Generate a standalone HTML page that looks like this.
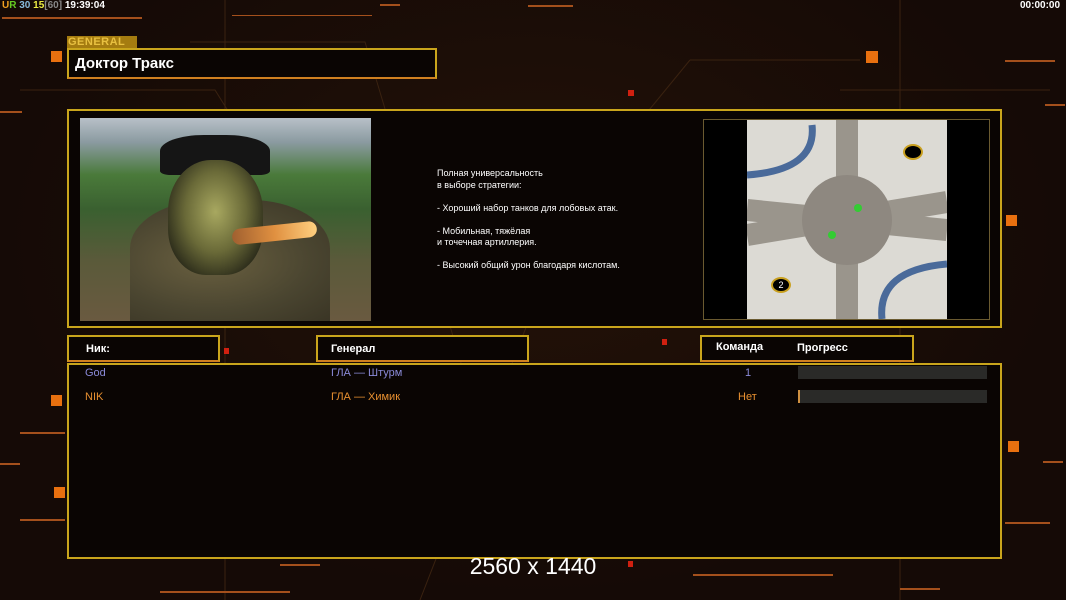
<!DOCTYPE html>
<html><head><meta charset="utf-8"><style>
*{margin:0;padding:0;box-sizing:border-box}
body{width:1066px;height:600px;overflow:hidden;background:#170c07;font-family:"Liberation Sans",sans-serif;position:relative}
.a{position:absolute}
.box{position:absolute;border:2px solid #c9a51c;background:#0a0503}
.ln{position:absolute;height:2px;background:#a4501c}
.sq{position:absolute;background:#e8700f}
.t{position:absolute;font-size:11px;color:#fff;font-weight:bold}
.r{position:absolute;font-size:11px}
</style></head><body>
<div class="a" style="left:0;top:0;width:1066px;height:600px;background:radial-gradient(ellipse at 50% 40%,#241208 0%,#150a06 70%)"></div>
<svg class="a" style="left:0;top:0" width="1066" height="600"><g stroke="#3a2210" stroke-width="1" fill="none">
<path d="M20 90 L215 90 L240 130"/><path d="M190 42 L365 42 L520 560"/><path d="M690 60 L860 60"/><path d="M840 90 L1050 90"/><path d="M600 170 L690 60"/><path d="M900 0 L900 600"/><path d="M225 0 L225 600"/><path d="M420 600 L560 240"/></g></svg>
<div class="ln" style="left:2px;top:17px;width:140px"></div>
<div class="ln" style="left:232px;top:15px;width:140px;height:1px"></div>
<div class="ln" style="left:380px;top:4px;width:20px"></div>
<div class="ln" style="left:528px;top:5px;width:45px"></div>
<div class="ln" style="left:0;top:111px;width:22px"></div>
<div class="ln" style="left:20px;top:432px;width:45px"></div>
<div class="ln" style="left:20px;top:519px;width:45px"></div>
<div class="ln" style="left:0;top:463px;width:20px"></div>
<div class="ln" style="left:1005px;top:60px;width:50px"></div>
<div class="ln" style="left:1045px;top:104px;width:20px"></div>
<div class="ln" style="left:1005px;top:522px;width:45px"></div>
<div class="ln" style="left:1043px;top:461px;width:20px"></div>
<div class="ln" style="left:280px;top:564px;width:40px"></div>
<div class="ln" style="left:693px;top:574px;width:140px"></div>
<div class="ln" style="left:160px;top:591px;width:130px"></div>
<div class="ln" style="left:900px;top:588px;width:40px"></div>
<div class="sq" style="left:51px;top:51px;width:11px;height:11px"></div>
<div class="sq" style="left:866px;top:51px;width:12px;height:12px"></div>
<div class="sq" style="left:1006px;top:215px;width:11px;height:11px"></div>
<div class="sq" style="left:1008px;top:441px;width:11px;height:11px"></div>
<div class="sq" style="left:51px;top:395px;width:11px;height:11px"></div>
<div class="sq" style="left:54px;top:487px;width:11px;height:11px"></div>
<div class="sq" style="left:628px;top:90px;width:6px;height:6px;background:#d02010"></div>
<div class="sq" style="left:224px;top:348px;width:5px;height:6px;background:#d02010"></div>
<div class="sq" style="left:662px;top:339px;width:5px;height:6px;background:#d02010"></div>
<div class="sq" style="left:628px;top:561px;width:5px;height:6px;background:#d02010"></div>
<div class="t" style="left:2px;top:0;font-size:10px"><span style="color:#f0a020">U</span><span style="color:#6c2">R</span> <span style="color:#8bd">30</span> <span style="color:#ee4">15</span><span style="color:#888">[60]</span> 19:39:04</div>
<div class="t" style="left:1020px;top:0;font-size:10px">00:00:00</div>
<div class="a" style="left:67px;top:36px;width:70px;height:12px;background:#a57c10;color:#e8c040;font-size:11px;font-weight:bold;line-height:12px;padding-left:1px;letter-spacing:0.5px">GENERAL</div>
<div class="box" style="left:67px;top:48px;width:370px;height:31px;border-bottom-color:#d08020"><div class="t" style="left:6px;top:5px;font-size:15px">Доктор Тракс</div></div>
<div class="box" style="left:67px;top:109px;width:935px;height:219px"></div>
<div class="a" style="left:80px;top:118px;width:291px;height:203px;background:linear-gradient(180deg,#b8c0c8 0%,#8a9aa0 12%,#4a7a3a 28%,#3a6030 45%,#5a5a3a 70%,#6a5a40 100%)"></div>
<div class="a" style="left:130px;top:200px;width:200px;height:121px;border-radius:40% 40% 0 0;background:radial-gradient(ellipse at 40% 50%,#6a6040 0%,#4a4530 60%,#3a3525 100%)"></div>
<div class="a" style="left:160px;top:135px;width:110px;height:40px;border-radius:40% 40% 10% 10%;background:#151515"></div>
<div class="a" style="left:168px;top:160px;width:95px;height:115px;border-radius:45% 45% 40% 40%;background:radial-gradient(ellipse at 50% 45%,#a8a860 0%,#6a6a38 45%,#202015 85%)"></div>
<div class="a" style="left:232px;top:225px;width:85px;height:16px;border-radius:8px;background:linear-gradient(90deg,#a06030,#e09040,#ffd080);transform:rotate(-6deg)"></div>
<div class="r" style="left:437px;top:168px;color:#fff;font-size:9px;line-height:11.5px">Полная универсальность<br>в выборе стратегии:<br><br>- Хороший набор танков для лобовых атак.<br><br>- Мобильная, тяжёлая<br>и точечная артиллерия.<br><br>- Высокий общий урон благодаря кислотам.</div>
<div class="a" style="left:703px;top:119px;width:287px;height:201px;background:#000;border:1px solid #6a5a30"></div>
<div class="a" style="left:747px;top:120px;width:200px;height:199px;background:#dcdad4;overflow:hidden">
<svg width="200" height="199"><path d="M0 90 L200 110 M0 115 L200 82 M100 0 L100 199" stroke="#9a958c" stroke-width="22" fill="none"/>
<path d="M70 235 L45 200" stroke="#9a958c" stroke-width="0"/>
<circle cx="100" cy="100" r="45" fill="#8e8880"/>
<path d="M0 55 Q70 50 65 5" stroke="#4a6a9a" stroke-width="7" fill="none"/><path d="M200 144 Q130 150 135 199" stroke="#4a6a9a" stroke-width="7" fill="none"/>
<circle cx="111" cy="88" r="4" fill="#3c3"/><circle cx="85" cy="115" r="4" fill="#3c3"/></svg></div>
<div class="a" style="left:903px;top:144px;width:20px;height:16px;border-radius:50%;background:#000;border:2px solid #c9a020"></div>
<div class="a" style="left:771px;top:277px;width:20px;height:16px;border-radius:50%;background:#000;border:2px solid #c9a020;color:#fff;font-size:9px;text-align:center;line-height:12px">2</div>
<div class="box" style="left:67px;top:335px;width:153px;height:27px;border-bottom-color:#d08020"><div class="t" style="left:17px;top:6px">Ник:</div></div>
<div class="box" style="left:316px;top:335px;width:213px;height:27px;border-bottom-color:#d08020"><div class="t" style="left:13px;top:6px">Генерал</div></div>
<div class="box" style="left:700px;top:335px;width:214px;height:27px;border-bottom-color:#d08020"><div class="t" style="left:14px;top:4px">Команда</div><div class="t" style="left:95px;top:5px">Прогресс</div></div>
<div class="box" style="left:67px;top:363px;width:935px;height:196px"></div>
<div class="r" style="left:85px;top:367px;color:#8a8ad8">God</div>
<div class="r" style="left:331px;top:367px;color:#8a8ad8">ГЛА — Штурм</div>
<div class="r" style="left:745px;top:367px;color:#8a8ad8">1</div>
<div class="r" style="left:85px;top:391px;color:#e89030">NIK</div>
<div class="r" style="left:331px;top:391px;color:#e89030">ГЛА — Химик</div>
<div class="r" style="left:738px;top:391px;color:#e89030">Нет</div>
<div class="a" style="left:798px;top:366px;width:189px;height:13px;background:#2a2a28"></div>
<div class="a" style="left:798px;top:390px;width:189px;height:13px;background:#2a2a28;border-left:2px solid #d09040"></div>
<div class="a" style="left:0;top:553px;width:1066px;text-align:center;color:#fff;font-size:23px">2560 x 1440</div>
</body></html>
